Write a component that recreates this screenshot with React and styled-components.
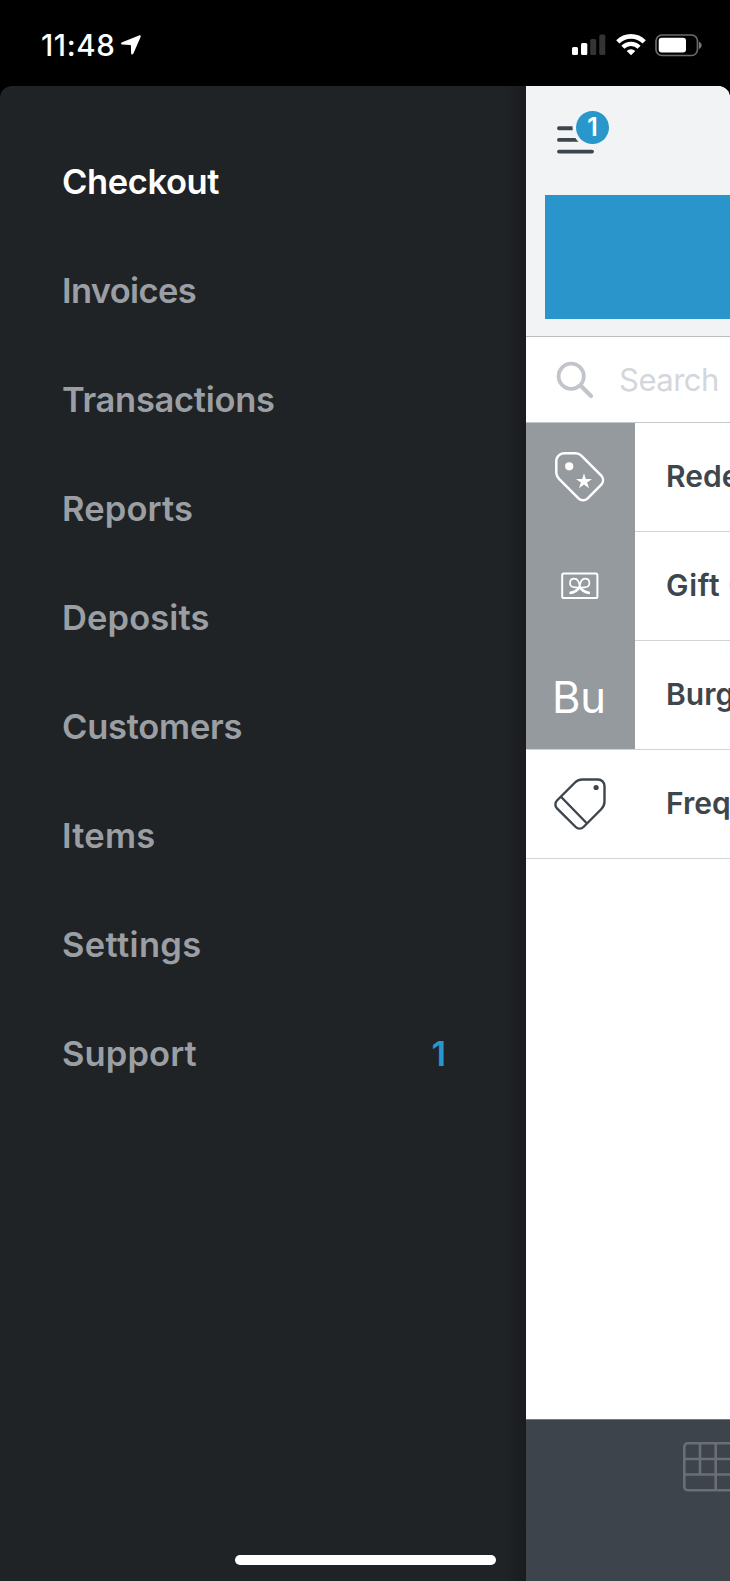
import React from "react";
import styled, { createGlobalStyle } from "styled-components";

const GlobalStyle = createGlobalStyle`
  * {
    box-sizing: border-box;
  }
  body {
    margin: 0;
    background: #000;
    font-family: Inter, "Liberation Sans", sans-serif;
  }
`;

const Screen = styled.div`
  position: relative;
  display: flex;
  flex-direction: column;
  width: 730px;
  height: 1581px;
  overflow: hidden;
  background: #000;
`;

const StatusBar = styled.header`
  display: flex;
  align-items: center;
  justify-content: space-between;
  height: 86px;
  padding: 4px 28px 0 41px;
  flex-shrink: 0;
`;

const Clock = styled.div`
  display: flex;
  align-items: center;
  gap: 6px;
  color: #fff;
  font-size: 29.5px;
  font-weight: 500;
  line-height: 36px;
  letter-spacing: 0.6px;
`;

const StatusIcons = styled.div`
  display: flex;
  align-items: center;
  gap: 9.5px;
`;

const Body = styled.div`
  display: flex;
  flex: 1;
  min-height: 0;
  border-radius: 12px 12px 0 0;
  overflow: hidden;
`;

const Drawer = styled.nav`
  width: 526px;
  flex-shrink: 0;
  padding-top: 40.5px;
  background: linear-gradient(to right, transparent 505px, #1a1b1e 526px), #1f2326;
`;

const MenuItem = styled.div`
  display: flex;
  align-items: center;
  justify-content: space-between;
  height: 109px;
  padding: 0 80px 0 62px;
  color: ${(props) => (props.$active ? "#fff" : "#9b9fa4")};
  font-size: 34.5px;
  font-weight: 600;
  letter-spacing: ${(props) => props.$tracking || 0}px;
`;

const Count = styled.span`
  color: #2996cc;
  letter-spacing: 0;
`;

const Main = styled.main`
  display: flex;
  flex-direction: column;
  flex: 1;
  min-width: 0;
  background: #fff;
`;

const TopBar = styled.div`
  height: 251px;
  padding: 25px 0 0 19px;
  background: #f1f3f5;
  border-bottom: 1px solid #b9bdc1;
`;

const MenuButton = styled.div`
  position: relative;
  width: 70px;
  height: 84px;
  padding: 15px 0 0 12px;
`;

const Badge = styled.span`
  position: absolute;
  top: 0;
  left: 31px;
  width: 33px;
  height: 33px;
  border-radius: 50%;
  background: #2996cc;
  color: #fff;
  font-size: 25px;
  font-weight: 600;
  line-height: 33px;
  text-align: center;
`;

const ChargeButton = styled.div`
  height: 124px;
  background: #2a95cb;
`;

const SearchRow = styled.div`
  display: flex;
  align-items: center;
  gap: 25px;
  height: 86px;
  padding-left: 30px;
  border-bottom: 1px solid #c3c8cc;
  color: #d3d7db;
  font-size: 31px;
  letter-spacing: -0.5px;
`;

const ItemRow = styled.div`
  display: flex;
  height: 109px;
`;

const Tile = styled.div`
  display: flex;
  align-items: center;
  justify-content: center;
  width: 109px;
  flex-shrink: 0;
  padding: ${(props) => (props.$initials ? "3px 3px 0 0" : "0 1px 1px 0")};
  background: ${(props) => (props.$plain ? "#fff" : "#959a9f")};
  border-bottom: ${(props) => (props.$divided ? "1px solid #d0d4d8" : "none")};
  color: #fff;
  font-size: 43.5px;
  font-weight: 400;
`;

const ItemName = styled.div`
  display: flex;
  align-items: center;
  flex: 1;
  padding: 0 0 2px 31px;
  border-bottom: 1px solid #d0d4d8;
  color: #3d454d;
  font-size: 30px;
  font-weight: 600;
  letter-spacing: ${(props) => props.$tracking || 0}px;
  white-space: pre;
  overflow: hidden;
`;

const TabBar = styled.footer`
  display: flex;
  justify-content: flex-end;
  height: 162px;
  margin-top: auto;
  padding-top: 22px;
  background: #3d444b;
  border-top: 1px solid #747c7f;
`;

const HomeIndicator = styled.div`
  position: absolute;
  left: 235px;
  bottom: 16px;
  width: 261px;
  height: 10px;
  border-radius: 5px;
  background: #fff;
`;

const LocationIcon = () => (
  <svg width="20" height="20" viewBox="0 0 20 20" fill="#fff">
    <path d="M18 .4 1.2 7.3C-.5 8-.2 9.5 1.3 9.6l8 .3c.4 0 .6.2.6.6l.2 7.8c.1 1.5 1.6 1.8 2.3.2L19.6 1.9C20 .7 19.2-.1 18 .4z" />
  </svg>
);

const SignalIcon = () => (
  <svg width="34" height="22" viewBox="0 0 34 22" fill="#fff">
    <rect x="0" y="13" width="6" height="8" rx="1.5" />
    <rect x="9" y="9" width="6.3" height="12" rx="1.5" />
    <rect x="18.2" y="5" width="6" height="16" rx="1.5" fill="#343434" />
    <rect x="27.3" y="0.5" width="6" height="20.5" rx="1.5" fill="#343434" />
  </svg>
);

const WifiIcon = () => (
  <svg width="30" height="22" viewBox="0 0 30 22" fill="none" stroke="#fff">
    <path d="M1.8 7.8a18.8 18.8 0 0 1 26.4 0" strokeWidth="4.6" />
    <path d="M6.9 13.3a11.5 11.5 0 0 1 16.2 0" strokeWidth="4.3" />
    <path d="M15 21.3l-4.3-4.2a6.2 6.2 0 0 1 8.6 0z" fill="#fff" stroke="none" />
  </svg>
);

const BatteryIcon = () => (
  <svg width="47" height="23" viewBox="0 0 47 23">
    <rect x="1" y="1" width="41.5" height="20.5" rx="6" fill="none" stroke="#6b6b6b" strokeWidth="1.7" />
    <rect x="3.7" y="3.8" width="27.3" height="14.8" rx="3" fill="#fff" />
    <path d="M44 7.7c3.5 1.2 3.5 6 0 7.2z" fill="#777" />
  </svg>
);

// The disc cuts a gap in the upper bars, where the badge sits.
const HamburgerIcon = () => (
  <svg width="38" height="28" viewBox="0 0 38 28" stroke="#3d454d" strokeWidth="3.9" strokeLinecap="round" display="block">
    <path d="M2 2.3h30M2 13.9h30" />
    <circle cx="35.5" cy="1.5" r="20" fill="#f1f3f5" stroke="none" />
    <path d="M2 25.6h33" />
  </svg>
);

const SearchIcon = () => (
  <svg width="38" height="38" viewBox="0 0 38 38" fill="none" stroke="#c1c5ca" strokeLinecap="round">
    <circle cx="15.2" cy="15.3" r="12.6" strokeWidth="3.8" />
    <path d="M24.5 24.5 35 35" strokeWidth="4.2" />
  </svg>
);

const RewardIcon = () => (
  <svg width="50" height="50" viewBox="0 0 50 50" fill="#fff">
    <path
      d="M9 1.3h11.5a9 9 0 0 1 6.1 2.5l19.7 19.7a7 7 0 0 1 0 9.2L32.7 46.3a6.5 6.5 0 0 1-9.2 0L3.8 26.6a8 8 0 0 1-2.5-6V9a7.7 7.7 0 0 1 7.7-7.7z"
      fill="none"
      stroke="#fff"
      strokeWidth="2.5"
    />
    <circle cx="14.2" cy="14.3" r="4.1" />
    <path d="M29 21.3l1.9 5.6h6.1l-4.9 3.5 1.9 5.8-5-3.6-5 3.6 1.9-5.8-4.9-3.5h6.1z" />
  </svg>
);

const GiftCardIcon = () => (
  <svg width="38" height="28" viewBox="0 0 38 28" fill="none" stroke="#fff">
    <rect x="1.2" y="1.5" width="35.2" height="24.6" rx="1.7" strokeWidth="2" />
    <path
      d="M18.7 15.5c-.2-4.5-2-8.8-5.7-8.8-4.8 0-5.3 7.2-1.2 8.3 2.7.7 5 .5 6.9.5 1.9 0 4.2.2 6.9-.5 4.1-1.1 3.6-8.3-1.2-8.3-3.7 0-5.5 4.3-5.7 8.8z"
      strokeWidth="1.7"
    />
    <path d="M18.5 15c-2 3.500-5 5.600-10 6M18.900 15c2 3.500 5 5.600 10 6" strokeWidth="2.6" />
  </svg>
);

const DiscountIcon = () => (
  <svg width="52" height="52" viewBox="0 0 52 52" fill="none" stroke="#3d454d" strokeWidth="2.4">
    <path d="M28.5 1.5H44a6.5 6.5 0 0 1 6.5 6.5v15.500a11 11 0 0 1-3.100 7.500L29.500 49a5.500 5.500 0 0 1-7.800 0L3 30.300a5.500 5.500 0 0 1 0-7.800L20.500 5a11 11 0 0 1 8-3.500z" />
    <path d="M7.2 19 32.5 45" />
    <circle cx="42.1" cy="9.5" r="2.6" fill="#3d454d" stroke="none" />
  </svg>
);

const KeypadIcon = () => (
  <svg width="47" height="50" viewBox="0 0 47 50" fill="none" stroke="#6b6e77" strokeWidth="2.6">
    <rect x="1.3" y="1.3" width="61" height="47" rx="3.5" />
    <path d="M1 17h46M1 32.5h46M17 1v31.500M32.700 1v47" />
  </svg>
);

const menu = [
  { label: "Checkout", active: true, tracking: -0.4 },
  { label: "Invoices", tracking: -0.65 },
  { label: "Transactions", tracking: -0.3 },
  { label: "Reports", tracking: 0.15 },
  { label: "Deposits", tracking: 0.1 },
  { label: "Customers", tracking: -0.25 },
  { label: "Items", tracking: 0.2 },
  { label: "Settings", tracking: 0.35 },
  { label: "Support", tracking: 0.1, count: 1 },
];

const items = [
  { name: "Rede", tile: <RewardIcon /> },
  { name: "Gift C", tile: <GiftCardIcon />, tracking: 0.7 },
  { name: "Burg", tile: "Bu", initials: true, divided: true },
  { name: "Freq", tile: <DiscountIcon />, plain: true, divided: true },
];

function App() {
  return (
    <>
      <GlobalStyle />
      <Screen>
        <StatusBar>
          <Clock>
            11:48
            <LocationIcon />
          </Clock>
          <StatusIcons>
            <SignalIcon />
            <WifiIcon />
            <BatteryIcon />
          </StatusIcons>
        </StatusBar>
        <Body>
          <Drawer>
            {menu.map((item) => (
              <MenuItem key={item.label} $active={item.active} $tracking={item.tracking}>
                {item.label}
                {item.count && <Count>{item.count}</Count>}
              </MenuItem>
            ))}
          </Drawer>
          <Main>
            <TopBar>
              <MenuButton>
                <HamburgerIcon />
                <Badge>1</Badge>
              </MenuButton>
              <ChargeButton />
            </TopBar>
            <SearchRow>
              <SearchIcon />
              Search
            </SearchRow>
            {items.map((item) => (
              <ItemRow key={item.name}>
                <Tile $plain={item.plain} $divided={item.divided} $initials={item.initials}>
                  {item.tile}
                </Tile>
                <ItemName $tracking={item.tracking}>{item.name}</ItemName>
              </ItemRow>
            ))}
            <TabBar>
              <KeypadIcon />
            </TabBar>
          </Main>
        </Body>
        <HomeIndicator />
      </Screen>
    </>
  );
}

export default App;
